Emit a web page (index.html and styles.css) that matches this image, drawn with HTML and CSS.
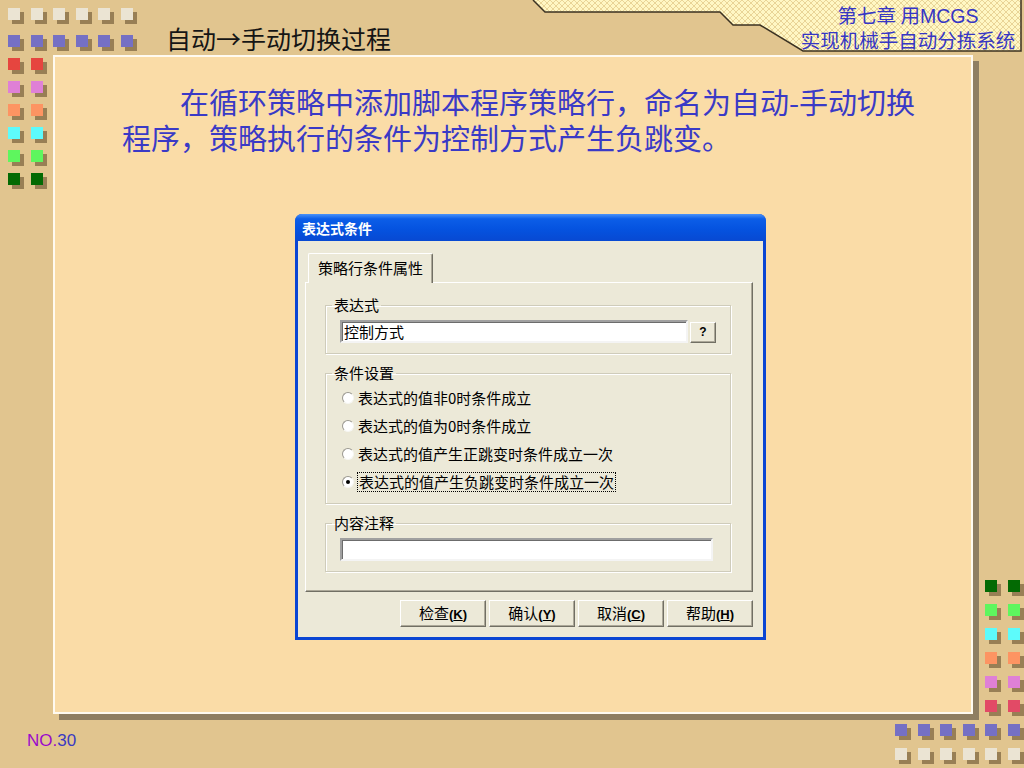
FILE: index.html
```html
<!DOCTYPE html>
<html lang="zh-CN">
<head>
    <meta charset="UTF-8">
    <meta name="viewport" content="width=device-width, initial-scale=1.0">
    <title>自动→手动切换过程</title>
    <link rel="stylesheet" href="styles.css">
</head>
<body>
<div class="slide">

    <!-- corner decorations -->
    <div class="deco deco-tl">
        <div class="sq-row"><i class="sq cream"></i><i class="sq cream"></i><i class="sq cream"></i><i class="sq cream"></i><i class="sq cream"></i><i class="sq cream"></i></div>
        <div class="sq-row first-gap"><i class="sq purple"></i><i class="sq purple"></i><i class="sq purple"></i><i class="sq purple"></i><i class="sq purple"></i><i class="sq purple"></i></div>
        <div class="sq-row"><i class="sq red"></i><i class="sq red"></i></div>
        <div class="sq-row"><i class="sq pink"></i><i class="sq pink"></i></div>
        <div class="sq-row"><i class="sq orange"></i><i class="sq orange"></i></div>
        <div class="sq-row"><i class="sq cyan"></i><i class="sq cyan"></i></div>
        <div class="sq-row"><i class="sq green"></i><i class="sq green"></i></div>
        <div class="sq-row"><i class="sq dkgreen"></i><i class="sq dkgreen"></i></div>
    </div>
    <div class="deco deco-br">
        <div class="sq-row"><i class="sq dkgreen"></i><i class="sq dkgreen"></i></div>
        <div class="sq-row"><i class="sq green"></i><i class="sq green"></i></div>
        <div class="sq-row"><i class="sq cyan"></i><i class="sq cyan"></i></div>
        <div class="sq-row"><i class="sq orange"></i><i class="sq orange"></i></div>
        <div class="sq-row"><i class="sq pink"></i><i class="sq pink"></i></div>
        <div class="sq-row"><i class="sq rose"></i><i class="sq rose"></i></div>
        <div class="sq-row"><i class="sq purple"></i><i class="sq purple"></i><i class="sq purple"></i><i class="sq purple"></i><i class="sq purple"></i><i class="sq purple"></i></div>
        <div class="sq-row"><i class="sq cream"></i><i class="sq cream"></i><i class="sq cream"></i><i class="sq cream"></i><i class="sq cream"></i><i class="sq cream"></i></div>
    </div>

    <div class="header">
        <h1 class="title">自动→手动切换过程</h1>
        <div class="ribbon">
            <svg class="ribbon-bg" width="504" height="54" viewBox="0 0 504 54">
                <defs>
                    <pattern id="hatch" width="6" height="6" patternUnits="userSpaceOnUse">
                        <rect width="6" height="6" fill="#fff7c4"/>
                        <path d="M0 0 L6 6 M6 0 L0 6" stroke="#e9d497" stroke-width="1"/>
                    </pattern>
                </defs>
                <polygon points="13,0 25,12 200,12 213,25 240,25 283,51 501,51 501,0" fill="url(#hatch)"/>
                <polyline points="13,0 25,12 200,12 213,25 240,25 283,51 501,51 501,0" fill="none" stroke="#3b3222" stroke-width="1.5"/>
            </svg>
            <p class="chapter">第七章 用<span class="latin">MCGS</span><br>实现机械手自动分拣系统</p>
        </div>
    </div>

    <div class="panel">
        <p class="intro">在循环策略中添加脚本程序策略行，命名为自动-手动切换<br>程序，策略执行的条件为控制方式产生负跳变。</p>

        <div class="dialog">
            <div class="dialog-title">表达式条件</div>
            <div class="dialog-body">
                <div class="tabs"><span class="tab">策略行条件属性</span></div>
                <div class="tab-page">
                    <fieldset class="group">
                        <legend>表达式</legend>
                        <div class="expr-row">
                            <div class="field expr">控制方式</div>
                            <span class="mini-btn">?</span>
                        </div>
                    </fieldset>
                    <fieldset class="group options">
                        <legend>条件设置</legend>
                        <div class="option"><i class="radio"></i><span>表达式的值非0时条件成立</span></div>
                        <div class="option"><i class="radio"></i><span>表达式的值为0时条件成立</span></div>
                        <div class="option"><i class="radio"></i><span>表达式的值产生正跳变时条件成立一次</span></div>
                        <div class="option"><i class="radio checked"></i><span class="focus">表达式的值产生负跳变时条件成立一次</span></div>
                    </fieldset>
                    <fieldset class="group">
                        <legend>内容注释</legend>
                        <div class="field note"></div>
                    </fieldset>
                </div>
                <div class="actions">
                    <span class="btn">检查<b class="key">(<u>K</u>)</b></span>
                    <span class="btn">确认<b class="key">(<u>Y</u>)</b></span>
                    <span class="btn">取消<b class="key">(<u>C</u>)</b></span>
                    <span class="btn">帮助<b class="key">(<u>H</u>)</b></span>
                </div>
            </div>
        </div>
    </div>

    <p class="page-no"><span class="no">NO.</span>30</p>
</div>
</body>
</html>
```

FILE: styles.css
```css
* {
    box-sizing: border-box;
}
body {
    margin: 0;
    background-color: #e1c58f;
    font-family: "Liberation Sans", "Noto Sans CJK SC", sans-serif;
}
.slide {
    position: relative;
    width: 1024px;
    height: 768px;
    overflow: hidden;
    background-color: #e1c58f;
}

/* decoration squares */
.deco {
    position: absolute;
    display: flex;
    flex-direction: column;
    gap: 11px;
}
.deco-tl {
    left: 8px;
    top: 8px;
}
.deco-tl .first-gap {
    margin-top: 4px;
}
.deco-br {
    right: 4px;
    top: 580px;
    gap: 12px;
    align-items: flex-end;
}
.sq-row {
    display: flex;
    gap: 10.6px;
}
.sq {
    display: block;
    width: 12px;
    height: 12px;
    box-shadow: 4px 4px 0 rgba(92, 70, 38, 0.55);
}
.cream { background-color: #ebe4d3; }
.purple { background-color: #7570c4; }
.red { background-color: #e6453f; }
.rose { background-color: #e24a66; }
.pink { background-color: #df80d6; }
.orange { background-color: #fd9462; }
.cyan { background-color: #5dfbfb; }
.green { background-color: #5ef65e; }
.dkgreen { background-color: #036a03; }

/* header */
.header {
    display: flex;
    height: 55px;
}
.title {
    margin: 26px 0 0 166px;
    font-family: "Noto Sans CJK SC", sans-serif;
    font-weight: normal;
    font-size: 25px;
    line-height: 25px;
    color: #151515;
}
.ribbon {
    position: relative;
    margin-left: auto;
    width: 504px;
    height: 54px;
}
.ribbon-bg {
    position: absolute;
    left: 0;
    top: 0;
}
.chapter {
    position: relative;
    margin: 0 0 0 268px;
    padding-top: 3px;
    width: 240px;
    text-align: center;
    font-family: "Noto Sans CJK SC", sans-serif;
    font-size: 19.5px;
    line-height: 23px;
    color: #3636c4;
}
.chapter .latin {
    font-family: "Liberation Sans", sans-serif;
}

/* main panel */
.panel {
    width: 920px;
    height: 659px;
    margin-left: 53px;
    background-color: #fadca7;
    border: 2px solid #fffaf0;
    box-shadow: 6px 6px 0 #8f7e62;
}
.intro {
    margin: 26px 0 0 67px;
    font-family: "Noto Sans CJK SC", sans-serif;
    font-size: 29px;
    line-height: 36px;
    text-indent: 58px;
    color: #3a3ac6;
}

/* dialog */
.dialog {
    width: 471px;
    margin: 59px 0 0 240px;
    padding: 0 3px 3px;
    background-color: #0a45d3;
    border-radius: 7px 7px 0 0;
    font-family: "Noto Sans CJK SC", sans-serif;
    font-size: 15px;
    line-height: 18px;
    color: #000;
}
.dialog-title {
    height: 27px;
    margin: 0 -3px;
    padding: 5px 0 0 7px;
    border-radius: 7px 7px 0 0;
    background: linear-gradient(#4b93f8, #0c5ee8 18%, #0553e0 55%, #0849d2);
    color: #fff;
    font-weight: bold;
    font-size: 14px;
}
.dialog-body {
    padding: 12px 10px 10px 7px;
    background-color: #ece9d8;
}
.tabs {
    display: flex;
    padding-left: 3px;
}
.tab {
    position: relative;
    z-index: 1;
    height: 30px;
    margin-bottom: -1px;
    padding: 5px 9px 0;
    background-color: #ece9d8;
    border: 1px solid #fff;
    border-right-color: #716f64;
    border-bottom: 0;
    border-radius: 2px 2px 0 0;
    box-shadow: inset -1px 0 0 #aca899;
}
.tab-page {
    height: 310px;
    padding: 13px 21px 0 19px;
    border: 1px solid #fff;
    border-right-color: #716f64;
    border-bottom-color: #716f64;
    box-shadow: inset -1px -1px 0 #aca899;
}
.group {
    min-width: 0;
    margin: 0 0 10px;
    padding: 6px 14px 10px;
    border: 1px solid #cfccbb;
    box-shadow: inset 1px 1px 0 #fff, 1px 1px 0 #fff;
}
.group legend {
    margin-left: -8px;
    padding: 0 2px;
    line-height: 18px;
}
.expr-row {
    display: flex;
    align-items: flex-end;
    gap: 2px;
}
.field {
    height: 23px;
    padding: 1px 2px;
    background-color: #fff;
    border: 2px solid;
    border-color: #a0a0a0 #f4f4f4 #f4f4f4 #a0a0a0;
    box-shadow: inset 1px 1px 0 #6c6c6c;
}
.expr {
    width: 348px;
}
.note {
    width: 373px;
}
.mini-btn {
    width: 26px;
    height: 21px;
    text-align: center;
    font-family: "Liberation Sans", sans-serif;
    font-weight: bold;
    font-size: 12px;
    line-height: 19px;
    border: 1px solid;
    border-color: #fff #716f64 #716f64 #fff;
    box-shadow: inset -1px -1px 0 #aca899;
}
.options {
    padding-top: 2px;
    padding-bottom: 7px;
}
.option {
    display: flex;
    align-items: center;
    height: 28px;
}
.radio {
    position: relative;
    width: 12px;
    height: 12px;
    margin: 0 4px 0 2px;
    border-radius: 50%;
    background-color: #fff;
    border: 1px solid;
    border-color: #9a9890 #f6f6f2 #f6f6f2 #9a9890;
}
.radio.checked::after {
    content: "";
    position: absolute;
    left: 3px;
    top: 3px;
    width: 4px;
    height: 4px;
    border-radius: 50%;
    background-color: #000;
}
.focus {
    padding: 0 1px;
    outline: 1px dotted #000;
}
.actions {
    display: flex;
    justify-content: flex-end;
    gap: 3px;
    margin-top: 8px;
}
.btn {
    width: 86px;
    height: 27px;
    text-align: center;
    line-height: 24px;
    border: 1px solid;
    border-color: #fff #716f64 #716f64 #fff;
    box-shadow: inset -1px -1px 0 #aca899;
}
.key {
    font-family: "Liberation Sans", sans-serif;
    font-size: 13px;
}

/* footer */
.page-no {
    margin: 18px 0 0 27px;
    font-size: 17px;
    line-height: 18px;
    color: #3a3ac2;
}
.no {
    color: #9a0acb;
}
```
